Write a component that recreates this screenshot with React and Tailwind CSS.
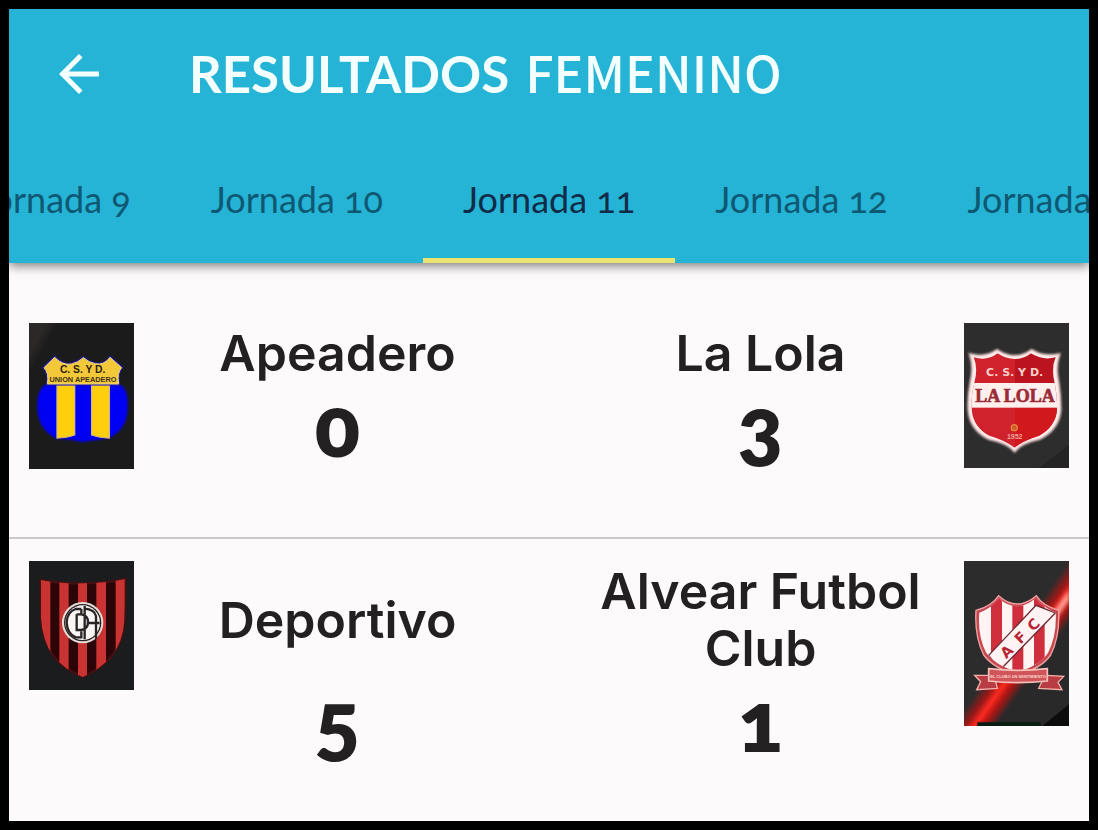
import { useEffect, useRef, useState } from "react"
import { MdArrowBack } from "react-icons/md"

const rounds = [9, 10, 11, 12, 13]

const matches = [
  {
    home: { name: "Apeadero", score: 0, Crest: ApeaderoCrest },
    away: { name: "La Lola", score: 3, Crest: LaLolaCrest }
  },
  {
    home: { name: "Deportivo", score: 5, Crest: DeportivoCrest },
    away: { name: "Alvear Futbol Club", score: 1, Crest: AlvearCrest }
  }
]

function App() {
  const [active, setActive] = useState(11)

  return (
    <div className="min-h-screen flex flex-col border-[9px] border-black bg-[#fcfafb] text-[#222021]">
      <header className="bg-[#25b4d6] shadow-[0_3px_10px_rgba(0,0,0,0.5)]">
        <div className="flex items-center gap-20 h-[130px] pl-10 text-[#f4ffff]">
          <button type="button" aria-label="Volver" className="cursor-pointer">
            <MdArrowBack size={60} />
          </button>
          <h1 className="flex items-baseline gap-4 whitespace-nowrap font-['Lato',sans-serif] text-[51px] font-bold">
            RESULTADOS
            <span className="font-['Noto_Sans_CJK_SC',sans-serif] text-[50px] leading-[60px] font-medium">FEMENINO</span>
          </h1>
        </div>
        <RoundTabs active={active} onChange={setActive} />
      </header>

      <main className="pt-[38px]">
        {matches.map((match, i) => (
          <MatchRow key={i} home={match.home} away={match.away} />
        ))}
      </main>
    </div>
  )
}

function RoundTabs({ active, onChange }) {
  const listRef = useRef(null)
  const activeRef = useRef(null)

  // keep the selected round in the middle of the bar
  useEffect(() => {
    const list = listRef.current
    const tab = activeRef.current
    list.scrollLeft = tab.offsetLeft + tab.offsetWidth / 2 - list.clientWidth / 2
  }, [active])

  return (
    <nav ref={listRef} className="relative flex overflow-x-auto [scrollbar-width:none]">
      {rounds.map(n => (
        <button
          key={n}
          ref={n === active ? activeRef : null}
          type="button"
          onClick={() => onChange(n)}
          className={`shrink-0 h-[124px] px-10 pb-1 border-y-[5px] border-t-transparent whitespace-nowrap font-['Lato',sans-serif] text-[36px] oldstyle-nums cursor-pointer ${
            n === active ? "border-b-[#ebe470] text-[#102c48]" : "border-b-transparent text-[#0f5873]"
          }`}
        >
          Jornada {n}
        </button>
      ))}
    </nav>
  )
}

function MatchRow({ home, away }) {
  return (
    <section className="grid grid-cols-[105px_1fr_1fr_105px] grid-rows-[auto_1fr] px-5 pt-[22px] pb-[68px] last:pb-0 border-b-2 last:border-b-0 border-[#cbc9ca] text-center">
      <div className="row-span-2"><home.Crest /></div>
      <TeamName>{home.name}</TeamName>
      <TeamName>{away.name}</TeamName>
      <div className="row-span-2"><away.Crest /></div>
      <Score>{home.score}</Score>
      <Score>{away.score}</Score>
    </section>
  )
}

function TeamName({ children }) {
  return (
    <h2 className="self-center pt-0.5 even:pr-2 odd:pl-2 font-['Inter',sans-serif] text-[50px] leading-[57px] font-semibold">{children}</h2>
  )
}

function Score({ children }) {
  return (
    <p className="odd:pr-2 even:pl-2 font-['Lato',sans-serif] text-[84px] leading-[86px] font-extrabold oldstyle-nums">{children}</p>
  )
}

function ApeaderoCrest() {
  return (
    <svg viewBox="0 0 315 438" className="block w-full" role="img" aria-label="Unión Apeadero">
      <defs>
        <linearGradient id="ape-bg" x1="0" y1="0" x2="0.5" y2="0.4">
          <stop offset="0.2" stopColor="#2c2828" />
          <stop offset="0.35" stopColor="#1b1b1b" />
        </linearGradient>
        <filter id="ape-soft"><feGaussianBlur stdDeviation="3" /></filter>
      </defs>
      <rect width="315" height="438" fill="url(#ape-bg)" />
      <path d="M53 183 L267 183 C292 190 298 220 296 255 C294 300 280 322 243 345 Q195 352 162 357 Q125 350 80 346 C42 325 26 295 25 255 C24 218 32 192 53 183Z" fill="#0505f2" filter="url(#ape-soft)" />
      <path d="M84 187h53v149q-24 9-53 9zM188 187h53v158q-29 0-53-9z" fill="#ffce0c" stroke="#d6b878" strokeWidth="4" />
      <path d="M77 103 Q101 128 127 123 Q147 119 163 104 Q180 119 199 122 Q225 128 243 103 L278 134 Q263 151 269 183 L55 183 Q61 151 45 134Z" fill="#f3c93a" stroke="#1d1797" strokeWidth="9" />
      <path d="M77 103 Q101 128 127 123 Q147 119 163 104 Q180 119 199 122 Q225 128 243 103 L278 134 Q263 151 269 183 L55 183 Q61 151 45 134Z" fill="#f3c93a" stroke="#ecd28e" strokeWidth="3" />
      <text x="161" y="149" textAnchor="middle" fontFamily="Liberation Sans" fontWeight="700" fontSize="31" fill="#2b2115">C. S. Y D.</text>
      <text x="162" y="177" textAnchor="middle" fontFamily="Liberation Sans" fontWeight="700" fontSize="22" fill="#43331c">UNION APEADERO</text>
    </svg>
  )
}

function LaLolaCrest() {
  return (
    <svg viewBox="0 0 315 435" className="block w-full" role="img" aria-label="La Lola">
      <defs>
        <clipPath id="lola-shield">
          <path d="M29 103 Q70 115 101 91 Q125 108 153 108 Q180 108 201 91 Q235 113 275 103 Q261 135 272 180 Q281 225 279 260 Q275 310 225 338 Q178 352 152 374 Q124 352 76 338 Q28 313 23 260 Q20 225 31 180 Q43 135 29 103Z" />
        </clipPath>
        <filter id="lola-soft"><feGaussianBlur stdDeviation="3" /></filter>
      </defs>
      <rect width="315" height="435" fill="#2d2d2d" />
      <path d="M315 365 L225 435 L315 435Z" fill="#242424" />
      <path d="M18 94 Q65 106 99 81 Q125 99 152 99 Q180 99 203 81 Q240 104 286 94 Q272 132 283 178 Q290 225 289 262 Q284 318 228 347 Q170 359 152 385 Q132 359 73 347 Q18 318 14 262 Q11 225 20 178 Q31 132 18 94Z" fill="#fff2f0" stroke="#f7d9d9" strokeWidth="6" filter="url(#lola-soft)" />
      <g clipPath="url(#lola-shield)">
        <rect width="153" height="400" fill="#cf222c" />
        <rect x="153" width="162" height="400" fill="#bb1420" />
        <rect y="255" x="153" width="162" height="145" fill="#d0181d" />
        <rect y="180" width="315" height="74" fill="#fff0ed" />
      </g>
      <text x="152" y="158" textAnchor="middle" fontFamily="DejaVu Sans" fontWeight="700" fontSize="33" fill="#f8cfc8">C. S. Y D.</text>
      <text x="153" y="237" textAnchor="middle" fontFamily="Liberation Serif" fontWeight="700" fontSize="54" fill="#9c2b38" stroke="#9c2b38" strokeWidth="2">LA LOLA</text>
      <circle cx="151" cy="314" r="9" fill="#cf5a2a" stroke="#e5873f" strokeWidth="4" />
      <text x="152" y="348" textAnchor="middle" fontFamily="Liberation Sans" fontWeight="700" fontSize="21" fill="#f3a69b">1952</text>
    </svg>
  )
}

function DeportivoCrest() {
  return (
    <svg viewBox="0 0 315 387" className="block w-full" role="img" aria-label="Deportivo">
      <defs>
        <clipPath id="dep-shield">
          <path d="M34 57 Q100 69 161 67 Q225 67 289 54 Q290 115 286 180 Q282 240 250 283 Q215 325 161 348 Q105 325 72 284 Q40 238 36 170Z" />
        </clipPath>
      </defs>
      <rect width="315" height="387" fill="#1b1c1d" />
      <path d="M34 57 Q100 69 161 67 Q225 67 289 54 Q290 115 286 180 Q282 240 250 283 Q215 325 161 348 Q105 325 72 284 Q40 238 36 170Z" fill="#2b0507" stroke="#451012" strokeWidth="7" />
      <g clipPath="url(#dep-shield)" fill="#c93331">
        <path d="M36 50h28v230h-28zM91 50h28v300h-28zM147 50h27v300h-27zM202 50h29v300h-29zM260 50h27v230h-27z" />
      </g>
      <circle cx="161" cy="185" r="62" fill="#e6ded9" />
      <circle cx="161" cy="185" r="56" fill="#29201f" />
      <circle cx="161" cy="185" r="52" fill="#faf5f3" />
      <g fill="none" stroke="#292526" strokeWidth="7">
        <path d="M157 144 H140 Q114 153 113 184 Q114 218 140 229 H157V211" />
        <path d="M157 144V160M143 160V207H157Q177 204 177 183Q177 163 157 160H143M167 135V235M167 143Q196 145 201 165V233M177 186H212" />
      </g>
    </svg>
  )
}

function AlvearCrest() {
  return (
    <svg viewBox="0 0 315 495" className="block w-full" role="img" aria-label="Alvear Futbol Club">
      <defs>
        <clipPath id="alv-shield">
          <path d="M104 112 Q158 160 215 112 Q236 139 275 155 Q279 223 252 276 Q225 315 160 333 Q95 314 67 276 Q40 225 46 155 Q82 143 104 112Z" />
        </clipPath>
        <linearGradient id="alv-beam" gradientUnits="userSpaceOnUse" x1="138" y1="250" x2="226" y2="312">
          <stop offset="0" stopColor="#2c2c2d" />
          <stop offset="0.3" stopColor="#9c1817" />
          <stop offset="0.5" stopColor="#fb2a20" />
          <stop offset="0.7" stopColor="#b01513" />
          <stop offset="1" stopColor="#29292a" />
        </linearGradient>
        <filter id="alv-soft"><feGaussianBlur stdDeviation="6" /></filter>
      </defs>
      <rect width="315" height="495" fill="url(#alv-beam)" />
      <path d="M262 165 L315 88 L315 118 L270 180Z" fill="#ffaaa0" filter="url(#alv-soft)" />
      <path d="M235 495 L315 430 V495Z" fill="#0c0c0c" />
      <path d="M40 484H230V495H40Z" fill="#071d12" />
      <path d="M104 104 Q158 154 217 104 Q236 135 284 148 Q288 225 260 282 Q231 324 160 341 Q89 323 59 282 Q31 226 36 148 Q82 137 104 104Z" fill="#c6474f" stroke="#f0a1a1" strokeWidth="4" />
      <g clipPath="url(#alv-shield)">
        <rect width="315" height="345" fill="#fff4f3" />
        <path d="M81 100h33v230h-33zM145 100h33v235h-33zM210 100h32v230h-32z" fill="#cf2f3c" />
        <path d="M74 283 L216 133 L274 156 L108 327Z" fill="#fff4f3" stroke="#6d2730" strokeWidth="4" />
      </g>
      <g fontFamily="DejaVu Sans" fontWeight="700" fontSize="44" fill="#b82534" textAnchor="middle">
        <text transform="translate(139 283) rotate(-44)">A</text>
        <text transform="translate(180 241) rotate(-44)">F</text>
        <text transform="translate(219 202) rotate(-44)">C</text>
      </g>
      <path d="M76 343L32 343L50 362L38 386L100 382L94 357ZM248 343L299 346L282 364L294 386L224 382L236 357Z" fill="#b83c43" stroke="#f2b1aa" strokeWidth="4" />
      <path d="M74 323 Q160 333 250 323 L250 360 Q160 370 74 360Z" fill="#d0555a" stroke="#f7c0b8" strokeWidth="5" />
      <text x="162" y="351" textAnchor="middle" fontFamily="Liberation Sans" fontWeight="700" fontSize="12" fill="#fbd5cd">EL CLUBO UN SENTIMIENTO</text>
    </svg>
  )
}

export default App
